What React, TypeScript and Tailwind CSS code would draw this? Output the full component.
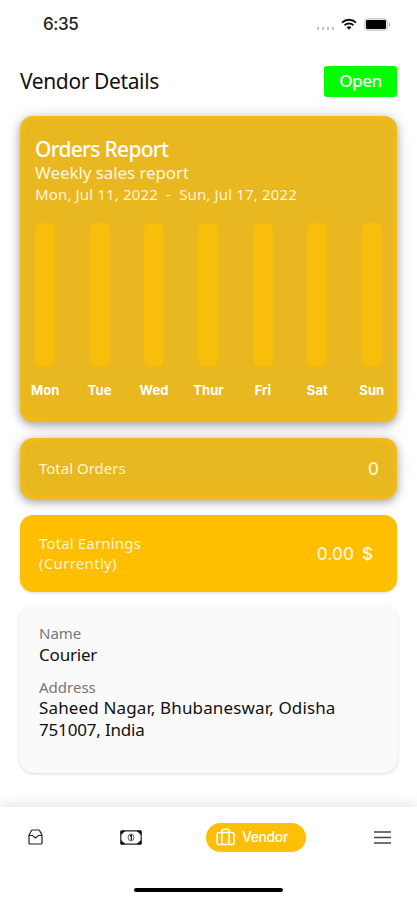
import React from 'react';

const days = ['Mon', 'Tue', 'Wed', 'Thur', 'Fri', 'Sat', 'Sun'];

const StatusBar: React.FC = () => (
  <div className="flex h-12 items-center justify-between pl-[43px] pr-[26px]">
    <span className="font-['Inter',sans-serif] text-[17px] font-medium leading-6 tracking-[-0.4px] text-[#222]">
      6:35
    </span>
    <div className="flex items-center">
      <div className="mt-2 flex gap-[3px]">
        <span className="h-[3px] w-[2px] bg-[#c4c4c4]" />
        <span className="h-[3px] w-[2px] bg-[#c4c4c4]" />
        <span className="h-[3px] w-[2px] bg-[#c4c4c4]" />
        <span className="h-[3px] w-[2px] bg-[#c4c4c4]" />
      </div>
      <svg className="ml-[7px] h-[12px] w-[16px]" viewBox="0 0 17 12" fill="none" stroke="#111" strokeWidth="2">
        <path d="M1 4.5a11 11 0 0 1 15 0" />
        <path d="M3.8 7.3a7 7 0 0 1 9.4 0" />
        <path d="M8.5 12 5.9 9.4a4 4 0 0 1 5.2 0z" fill="#111" stroke="none" />
      </svg>
      <svg className="ml-[7px] h-[13px] w-[27px]" viewBox="0 0 27 13">
        <rect x="0.5" y="0.5" width="23" height="12" rx="3" fill="#e4e4e4" stroke="#ccc" />
        <rect x="2" y="2" width="20" height="9" rx="1.2" fill="#000" />
        <path d="M25 4.5c1.8.6 1.8 3.4 0 4z" fill="#aaa" />
      </svg>
    </div>
  </div>
);

const BottomNav: React.FC = () => (
  <nav className="flex h-[93px] flex-col items-center justify-between bg-white pb-2 pt-[15px] shadow-[0_-2px_12px_rgba(0,0,0,0.12)]">
    <div className="flex h-[30px] w-full items-center pl-7 pr-[26px]">
      <svg className="h-4 w-[15px]" viewBox="0 0 15 16" fill="none" stroke="#222" strokeWidth="1.2">
        <path d="M1 6.2 3.3 1.800Q3.700 1 4.500 1h6q.8 0 1.200.8L14 6.200V14q0 1-1 1H2q-1 0-1-1z" />
        <path d="M1 6.500h3.500L7.500 9l3-2.500H14" />
      </svg>
      <svg className="ml-[77px] h-[15px] w-[22px]" viewBox="0 0 22 15">
        <rect x="0.8" y="0.8" width="20.400" height="13.400" rx="1" fill="#fff" stroke="#222" strokeWidth="1.200" />
        <path d="M1 1h4L1 4.500zM21 1h-4l4 3.500zM1 14h4l-4-3.500zM21 14h-4l4-3.500z" fill="#111" stroke="#111" strokeWidth="0.600" />
        <ellipse cx="11" cy="7.500" rx="2.900" ry="3.400" fill="none" stroke="#555" strokeWidth="0.900" />
        <path d="M9.900 5.900 11.300 5v5.200" fill="none" stroke="#111" strokeWidth="1.200" />
      </svg>
      <div className="ml-[64px] flex h-[29px] w-[100px] items-center rounded-full bg-[#ffbe08] pl-[10px]">
        <svg className="h-[18px] w-[19px] shrink-0" viewBox="0 0 19 18" fill="none" stroke="#fff" strokeWidth="1.500">
          <rect x="1" y="4.500" width="17" height="12" rx="2" />
          <path d="M6 16.500V3c0-1.200.6-1.800 1.800-1.800h3.400C12.400 1.200 13 1.800 13 3v13.500" />
        </svg>
        <span className="ml-[7px] whitespace-nowrap font-['Inter',sans-serif] text-sm font-medium tracking-[-0.4px] text-white">
          Vendor
        </span>
      </div>
      <svg className="ml-auto h-[13px] w-[17px]" viewBox="0 0 17 13" stroke="#444" strokeWidth="1.400">
        <path d="M0 1h17M0 6.500h17M0 12h17" />
      </svg>
    </div>
    <div className="h-1 w-[149px] rounded-full bg-black" />
  </nav>
);

const App: React.FC = () => {
  return (
    <div className="flex h-[900px] w-[417px] flex-col overflow-hidden bg-white font-['Noto_Sans',sans-serif] text-[#111]">
      <StatusBar />
      <main className="flex-1 px-5 pt-[18px]">
        <header className="flex h-[31px] items-center justify-between">
          <h1 className="text-[21px] tracking-[-0.38px]">Vendor Details</h1>
          <button className="h-[31px] w-[73px] rounded-[3px] bg-[#00ff00] pb-0.5 text-[17px] font-medium tracking-[-0.4px] text-white">
            Open
          </button>
        </header>

        <section className="mt-[19px] h-[306px] rounded-[13px] bg-[#e9b71f] pt-[20px] text-white shadow-[0_3px_8px_rgba(0,0,0,0.32),0_0_18px_rgba(0,0,0,0.1),inset_0_0_10px_rgba(255,196,24,0.7)]">
          <div className="whitespace-nowrap pl-[15px]">
            <h2 className="text-[21px] font-medium leading-[26px] tracking-[-0.72px]">Orders Report</h2>
            <p className="text-[17px] leading-[22px] tracking-[-0.08px] text-[#fff8df]">Weekly sales report</p>
            <p className="whitespace-pre text-[15px] leading-5 tracking-[0.15px] text-[#fff5d3]">
              {'Mon, Jul 11, 2022  -  Sun, Jul 17, 2022'}
            </p>
          </div>
          <div className="-mx-[2px] mt-[19px] grid grid-cols-7">
            {days.map((day) => (
              <div key={day} className="flex flex-col items-center">
                <div className="h-[144px] w-5 rounded-[7px] bg-[#f9bd0b]" />
                <span className="mt-[13px] font-['Inter',sans-serif] text-[13px] font-bold leading-5 tracking-[0.1px]">
                  {day}
                </span>
              </div>
            ))}
          </div>
        </section>

        <section className="mt-4 flex h-[61px] items-center justify-between rounded-[13px] bg-[#e9b71f] pl-[19px] pr-[18px] text-[#fff5d3] shadow-[0_3px_8px_rgba(0,0,0,0.32),0_0_18px_rgba(0,0,0,0.1),inset_0_0_10px_rgba(255,196,24,0.7)]">
          <span className="text-[15px]">Total Orders</span>
          <span className="pt-0.5 font-['Inter',sans-serif] text-[17px] font-medium">0</span>
        </section>

        <section className="mt-4 flex h-[77px] items-center justify-between rounded-[13px] bg-[#ffbe00] pl-[19px] pr-6 text-[#fff5d3] shadow-[0_1px_3px_rgba(0,0,0,0.15)]">
          <span className="-mt-px text-[15px] leading-5">
            <span className="tracking-[0.15px]">Total Earnings</span>
            <br />
            <span className="tracking-[0.3px]">(Currently)</span>
          </span>
          <span className="whitespace-pre pt-0.5 font-['Inter',sans-serif] text-[17px] font-medium">
            0.00<span className="ml-2 font-semibold">$</span>
          </span>
        </section>

        <section className="-mx-px mt-[13px] h-[168px] rounded-[15px] bg-[#fafafa] pl-5 pt-[17px] shadow-[0_1px_3px_rgba(0,0,0,0.16)]">
          <p className="text-[15px] leading-[22px] text-[#777]">Name</p>
          <p className="pt-px text-[17px] leading-5 tracking-[-0.2px]">Courier</p>
          <p className="mt-[11px] text-[15px] leading-[22px] text-[#777]">Address</p>
          <p className="-mt-px text-[17px] leading-[22px]">
            <span className="tracking-[0.14px]">Saheed Nagar, Bhubaneswar, Odisha</span>
            <br />
            <span className="tracking-[-0.18px]">751007, India</span>
          </p>
        </section>
      </main>
      <BottomNav />
    </div>
  );
};

export default App;
